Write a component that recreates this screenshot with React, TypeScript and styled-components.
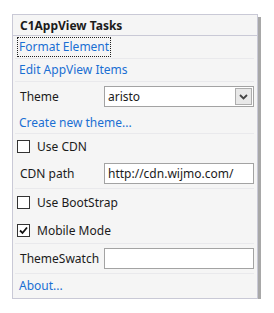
import React from "react";
import styled, { createGlobalStyle } from "styled-components";

const Global = createGlobalStyle`
  body {
    margin: 0;
    background: #ffffff;
    font-family: "Noto Sans", "Liberation Sans", sans-serif;
  }
`;

const Page = styled.div`
  padding: 14px 0 0 12px;
`;

const Panel = styled.div`
  width: 244px;
  background: #f5f5f5;
  border: 1px solid #c9c9d6;
  box-shadow: 3px 3px 0 #a8a8a8;
  display: flex;
  flex-direction: column;
  font-size: 12px;
  color: #1b1b1b;
`;

const Header = styled.div`
  height: 20px;
  border-bottom: 1px solid #c9c9d6;
  display: flex;
  align-items: center;
  padding-left: 7px;
  font-weight: bold;
  color: #1b1b1b;
`;

const Row = styled.div<{ $h: number; $line?: boolean }>`
  height: ${(p) => p.$h}px;
  margin: 0 3px 0 2px;
  border-bottom: 1px solid ${(p) => (p.$line === false ? "transparent" : "#e9e9ec")};
  display: flex;
  align-items: center;
  padding-left: 5px;

  &:last-child {
    border-bottom: none;
  }
`;

const Link = styled.span<{ $focus?: boolean }>`
  color: #1a6fd3;
  padding: 0 1px 1px 1px;
  margin-left: -2px;
  outline: ${(p) => (p.$focus ? "1px dotted #222" : "none")};
  outline-offset: 0;
  cursor: pointer;
`;

const Label = styled.span`
  width: 84px;
  flex: none;
`;

const Field = styled.div`
  flex: 1;
  height: 19px;
  border: 1px solid #a3a3a3;
  background: #fff;
  display: flex;
  align-items: center;
  padding-left: 3px;
  position: relative;
`;

const DropButton = styled.div`
  position: absolute;
  right: 1px;
  top: 1px;
  width: 15px;
  height: 15px;
  border: 1px solid #adadad;
  background: #e8e8e8;
  display: flex;
  align-items: center;
  justify-content: center;
`;

const Box = styled.div`
  width: 11px;
  height: 11px;
  border: 1px solid #333;
  background: #fff;
  margin-left: -3px;
  margin-right: 7px;
  display: flex;
  align-items: center;
  justify-content: center;
  flex: none;
`;

const Check = ({ checked, label }: { checked?: boolean; label: string }) => (
  <>
    <Box>
      {checked && (
        <svg width="9" height="9" viewBox="0 0 9 9">
          <path d="M1 4.5 L3.5 7 L8 1.5" fill="none" stroke="#111" strokeWidth="1.8" />
        </svg>
      )}
    </Box>
    <span>{label}</span>
  </>
);

export default function App() {
  return (
    <Page>
      <Global />
      <Panel>
        <Header>C1AppView Tasks</Header>
        <Row $h={22}>
          <Link $focus>Format Element</Link>
        </Row>
        <Row $h={22}>
          <Link>Edit AppView Items</Link>
        </Row>
        <Row $h={29} $line={false}>
          <Label>Theme</Label>
          <Field>
            aristo
            <DropButton>
              <svg width="9" height="6" viewBox="0 0 9 6">
                <path d="M1 1 L4.5 4.5 L8 1" fill="none" stroke="#444" strokeWidth="1.8" />
              </svg>
            </DropButton>
          </Field>
        </Row>
        <Row $h={21}>
          <Link>Create new theme...</Link>
        </Row>
        <Row $h={24} $line={false}>
          <Check label="Use CDN" />
        </Row>
        <Row $h={29}>
          <Label>CDN path</Label>
          <Field>http://cdn.wijmo.com/</Field>
        </Row>
        <Row $h={27} $line={false}>
          <Check label="Use BootStrap" />
        </Row>
        <Row $h={26}>
          <Check checked label="Mobile Mode" />
        </Row>
        <Row $h={29}>
          <Label>ThemeSwatch</Label>
          <Field />
        </Row>
        <Row $h={24}>
          <Link>About...</Link>
        </Row>
      </Panel>
    </Page>
  );
}
